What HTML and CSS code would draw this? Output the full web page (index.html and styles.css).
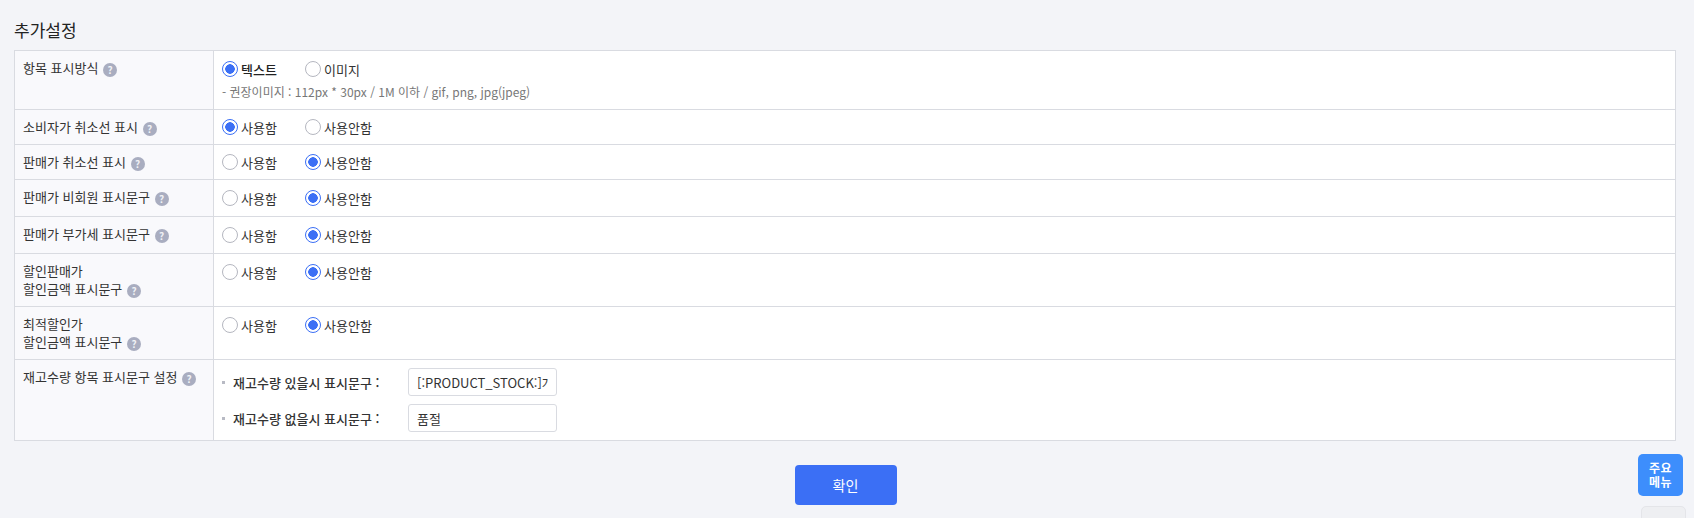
FILE: index.html
```html
<!DOCTYPE html>
<html lang="ko">
<head>
<meta charset="utf-8">
<title>추가설정</title>
<link rel="stylesheet" href="styles.css">
</head>
<body>
<main class="page">
  <h2 class="title">추가설정</h2>
  <table class="settings">
    <colgroup><col class="col-head"><col></colgroup>
    <tbody>
      <tr class="row-display">
        <th>항목 표시방식 <span class="help">?</span></th>
        <td>
          <div class="radios">
            <label class="radio on strong">텍스트</label>
            <label class="radio">이미지</label>
          </div>
          <p class="hint">- 권장이미지 : 112px * 30px / 1M 이하 / gif, png, jpg(jpeg)</p>
        </td>
      </tr>
      <tr class="row-s">
        <th>소비자가 취소선 표시 <span class="help">?</span></th>
        <td class="tight"><div class="radios"><label class="radio on">사용함</label><label class="radio">사용안함</label></div></td>
      </tr>
      <tr class="row-s">
        <th>판매가 취소선 표시 <span class="help">?</span></th>
        <td class="tight"><div class="radios"><label class="radio">사용함</label><label class="radio on">사용안함</label></div></td>
      </tr>
      <tr class="row-m">
        <th>판매가 비회원 표시문구 <span class="help">?</span></th>
        <td><div class="radios"><label class="radio">사용함</label><label class="radio on">사용안함</label></div></td>
      </tr>
      <tr class="row-m">
        <th>판매가 부가세 표시문구 <span class="help">?</span></th>
        <td><div class="radios"><label class="radio">사용함</label><label class="radio on">사용안함</label></div></td>
      </tr>
      <tr class="row-l">
        <th>할인판매가<br>할인금액 표시문구 <span class="help">?</span></th>
        <td><div class="radios"><label class="radio">사용함</label><label class="radio on">사용안함</label></div></td>
      </tr>
      <tr class="row-l">
        <th>최적할인가<br>할인금액 표시문구 <span class="help">?</span></th>
        <td><div class="radios"><label class="radio">사용함</label><label class="radio on">사용안함</label></div></td>
      </tr>
      <tr class="row-stock">
        <th>재고수량 항목 표시문구 설정 <span class="help">?</span></th>
        <td class="tight">
          <div class="field"><span class="field-label">재고수량 있을시 표시문구 :</span><input class="text" type="text" value="[:PRODUCT_STOCK:]개"></div>
          <div class="field"><span class="field-label">재고수량 없을시 표시문구 :</span><input class="text" type="text" value="품절"></div>
        </td>
      </tr>
    </tbody>
  </table>
  <div class="actions"><button class="confirm" type="button">확인</button></div>
</main>
<button class="float-menu" type="button">주요<br>메뉴</button>
<div class="float-grey"></div>
</body>
</html>
```
FILE: styles.css
```css
* { box-sizing: border-box; }
html, body { margin: 0; height: 518px; overflow: hidden; }
body {
  background: #f3f4f8;
  font-family: "Noto Sans CJK KR", "Noto Sans", sans-serif;
  font-size: 13px;
  color: #222;
  position: relative;
}
.page { padding: 20px 18px 0 14px; }
.title {
  margin: 0 0 10px;
  font-size: 17px;
  line-height: 20px;
  font-weight: 400;
  color: #222;
}
.settings {
  width: 100%;
  table-layout: fixed;
  border-collapse: collapse;
  background: #fff;
  border: 1px solid #d9dbe1;
}
.col-head { width: 199px; }
.settings th, .settings td {
  border: 1px solid #d9dbe1;
  vertical-align: top;
  padding: 0;
}
.settings th {
  background: #f9f9fc;
  font-weight: 400;
  text-align: left;
  line-height: 18px;
  padding: 8px 8px 0;
  color: #333;
}
.settings td { padding: 9px 8px 0 8px; }
.settings td.tight { padding-top: 8px; }
.row-display { height: 59px; }
.row-s { height: 35px; }
.row-m { height: 37px; }
.row-l { height: 53px; }
.row-stock { height: 81px; }
.help {
  display: inline-block;
  width: 14px;
  height: 14px;
  border-radius: 50%;
  background: #a9adc0;
  color: #f0f1f5;
  font-size: 10px;
  font-weight: 700;
  line-height: 14px;
  text-align: center;
  margin-left: 1px;
  vertical-align: -1px;
}
.radios { display: flex; height: 18px; align-items: center; }
.radio {
  display: flex;
  align-items: center;
  width: 83px;
  color: #333;
}
.radio::before {
  content: "";
  flex: none;
  width: 14px;
  height: 14px;
  border-radius: 50%;
  border: 1px solid #b5b7c0;
  background: #fff;
  margin-right: 3px;
}
.radio.on::before {
  border-color: #3b6ff5;
  background: radial-gradient(circle, #3b6ff5 0 4.5px, #fff 5px);
}
.strong { font-weight: 500; color: #222; }
.hint {
  margin: 6px 0 0;
  font-size: 12px;
  line-height: 16px;
  color: #777;
}
.field { display: flex; align-items: center; height: 28px; margin-bottom: 8px; }
.field:last-child { margin-bottom: 0; }
.field-label {
  width: 186px;
  padding-left: 11px;
  position: relative;
  font-weight: 500;
  color: #333;
}
.field-label::before {
  content: "";
  position: absolute;
  left: 0;
  top: 8px;
  width: 3px;
  height: 3px;
  background: #b8bac4;
}
.text {
  width: 149px;
  height: 28px;
  border: 1px solid #d9dbe1;
  border-radius: 3px;
  background: #fff;
  padding: 0 8px;
  font: inherit;
  color: #333;
}
.actions { display: flex; justify-content: center; padding-top: 24px; padding-left: 1px; }
.confirm {
  width: 102px;
  height: 40px;
  border: 0;
  border-radius: 4px;
  background: #3b6ff5;
  color: #fff;
  font: inherit;
  font-size: 14px;
}
.float-menu {
  position: absolute;
  left: 1638px;
  top: 454px;
  width: 45px;
  height: 42px;
  border: 0;
  border-radius: 5px;
  background: #3d8efc;
  color: #fff;
  font: inherit;
  font-size: 12px;
  font-weight: 700;
  letter-spacing: 0.5px;
  line-height: 14px;
  padding: 0;
}
.float-grey {
  position: absolute;
  left: 1641px;
  top: 506px;
  width: 45px;
  height: 20px;
  border: 1px solid #e4e5e9;
  border-radius: 5px;
  background: #eeeff2;
}
```
